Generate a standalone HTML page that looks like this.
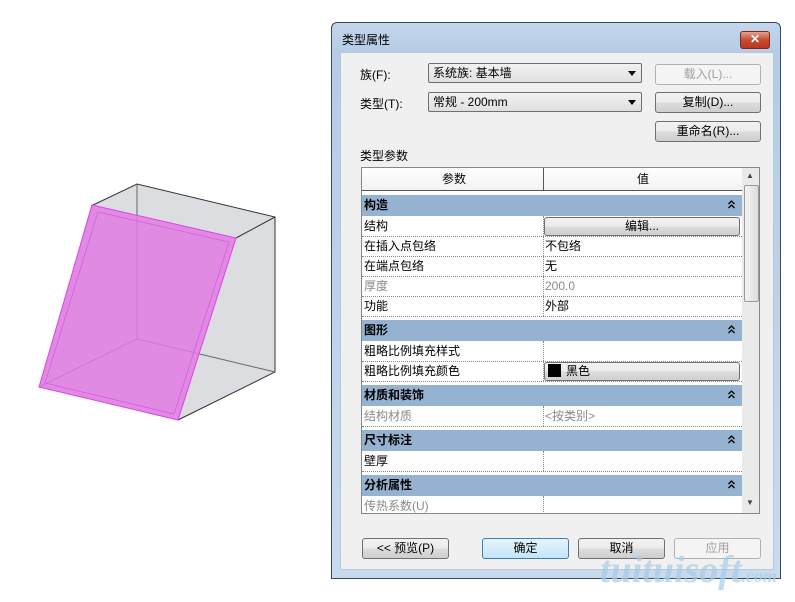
<!DOCTYPE html><html><head><meta charset="utf-8"><style>
body{margin:0;width:795px;height:602px;background:#fff;position:relative;overflow:hidden;font-family:"Liberation Sans","Noto Sans CJK SC",sans-serif;font-size:12px;color:#000}
.a{position:absolute}
.dlg{left:331px;top:22px;width:448px;height:555px;border:1px solid #3a4a5c;border-radius:6px 6px 0 0;background:linear-gradient(#c4d6ea,#b4cce6 30px,#c8daee);}
.inner{left:340px;top:52px;width:432px;height:516px;background:#f0f0f0;border:1px solid #b8c8da}
.btn{position:absolute;height:19px;border:1px solid #707070;border-radius:3px;background:linear-gradient(#f2f2f2,#ebebeb 50%,#dcdcdc 51%,#cfcfcf);text-align:center;line-height:19px;font-size:12px}
.dis{color:#a0a0a0;border-color:#adb2b5;background:#f4f4f4}
.cmb{position:absolute;height:18px;border:1px solid #707070;border-radius:2px;background:linear-gradient(#f2f2f2,#e0e0e0);line-height:18px;padding-left:4px}
.cmb:after{content:"";position:absolute;right:5px;top:7px;border:4px solid transparent;border-top:5px solid #000}
.grid{left:361px;top:167px;width:397px;height:345px;border:1px solid #828790;background:#fff;overflow:hidden}
.r{position:absolute;left:0;width:380px;height:20px;border-bottom:1px dotted #888;line-height:20px}
.r span{position:absolute;left:2px}
.r b{position:absolute;left:183px;font-weight:normal}
.r:after{content:"";position:absolute;left:181px;top:0;height:20px;border-left:1px dotted #888}
.g{position:absolute;left:0;width:380px;height:21px;background:#95b2d0;font-weight:bold;line-height:21px}
.g span{position:absolute;left:2px}
.g svg{position:absolute;right:7px;top:5px}
.gr{color:#8a8a8a}
</style></head><body>
<svg class="a" style="left:0;top:0" width="330" height="602">
<polygon points="91,206 137,184 275,217 275,372 178,420 39,387" fill="#dcdde0"/>
<polyline points="91,206 137,184 275,217 275,372 178,420" fill="none" stroke="#333" stroke-width="1"/>
<line x1="137" y1="184" x2="137" y2="339" stroke="#666"/>
<line x1="137" y1="339" x2="275" y2="372" stroke="#666"/>
<line x1="137" y1="339" x2="39" y2="387" stroke="#666"/>
<line x1="236" y1="238" x2="275" y2="217" stroke="#333"/>
<polygon points="92,205 236,238 178,420 39,387" fill="#e07be4" fill-opacity="0.85" stroke="#e040e8"/>
<polygon points="98,212 229,242 174,414 45,383" fill="none" stroke="#d85ce0" stroke-width="0.8"/>
</svg>
<div class="a dlg"></div>
<div class="a" style="left:342px;top:31px;font-size:12px">类型属性</div>
<div class="a" style="left:740px;top:31px;width:28px;height:16px;border:1px solid #7a2a20;border-radius:3px;background:linear-gradient(#e8a090,#c84a30 50%,#b83820);color:#fff;text-align:center;font-weight:bold;line-height:15px;font-size:12px">✕</div>
<div class="a inner"></div>
<div class="a" style="left:360px;top:66px">族(F):</div>
<div class="a" style="left:360px;top:95px">类型(T):</div>
<div class="cmb" style="left:428px;top:63px;width:208px">系统族: 基本墙</div>
<div class="cmb" style="left:428px;top:92px;width:208px">常规 - 200mm</div>
<div class="btn dis" style="left:655px;top:64px;width:104px">载入(L)...</div>
<div class="btn" style="left:655px;top:92px;width:104px">复制(D)...</div>
<div class="btn" style="left:655px;top:121px;width:104px">重命名(R)...</div>
<div class="a" style="left:360px;top:147px">类型参数</div>
<div class="a grid">
<div class="a" style="left:0;top:0;width:380px;height:22px;border-bottom:1px solid #555;background:linear-gradient(#fff,#f2f2f2);line-height:22px">
<span class="a" style="left:80px">参数</span><span class="a" style="left:181px;top:0;height:22px;border-left:1px solid #555"></span><span class="a" style="left:275px">值</span></div>
<div class="g" style="top:27px"><span>构造</span><svg width="7" height="9"><path d="M0.5 4L3.5 1L6.5 4M0.5 8L3.5 5L6.5 8" fill="none" stroke="#000" stroke-width="1.3"/></svg></div>
<div class="r" style="top:48px"><span>结构</span></div>
<div class="btn" style="left:182px;top:49px;width:194px;height:17px;line-height:17px">编辑...</div>
<div class="r" style="top:68px"><span>在插入点包络</span><b>不包络</b></div>
<div class="r" style="top:88px"><span>在端点包络</span><b>无</b></div>
<div class="r gr" style="top:108px"><span>厚度</span><b>200.0</b></div>
<div class="r" style="top:128px"><span>功能</span><b>外部</b></div>
<div class="g" style="top:152px"><span>图形</span><svg width="7" height="9"><path d="M0.5 4L3.5 1L6.5 4M0.5 8L3.5 5L6.5 8" fill="none" stroke="#000" stroke-width="1.3"/></svg></div>
<div class="r" style="top:173px"><span>粗略比例填充样式</span></div>
<div class="r" style="top:193px"><span>粗略比例填充颜色</span></div>
<div class="btn" style="left:182px;top:194px;width:194px;height:17px;line-height:17px;text-align:left"><span style="display:inline-block;width:13px;height:13px;background:#000;vertical-align:-2px;margin:0 5px 0 3px"></span>黑色</div>
<div class="g" style="top:217px"><span>材质和装饰</span><svg width="7" height="9"><path d="M0.5 4L3.5 1L6.5 4M0.5 8L3.5 5L6.5 8" fill="none" stroke="#000" stroke-width="1.3"/></svg></div>
<div class="r gr" style="top:238px"><span>结构材质</span><b>&lt;按类别&gt;</b></div>
<div class="g" style="top:262px"><span>尺寸标注</span><svg width="7" height="9"><path d="M0.5 4L3.5 1L6.5 4M0.5 8L3.5 5L6.5 8" fill="none" stroke="#000" stroke-width="1.3"/></svg></div>
<div class="r" style="top:283px"><span>壁厚</span></div>
<div class="g" style="top:307px"><span>分析属性</span><svg width="7" height="9"><path d="M0.5 4L3.5 1L6.5 4M0.5 8L3.5 5L6.5 8" fill="none" stroke="#000" stroke-width="1.3"/></svg></div>
<div class="r gr" style="top:328px"><span>传热系数(U)</span></div>
<div class="a" style="left:380px;top:0;width:17px;height:345px;background:#eaeaea"></div>
<div class="a" style="left:382px;top:17px;width:13px;height:115px;border:1px solid #999;border-radius:2px;background:linear-gradient(90deg,#f4f4f4,#dcdcdc)"></div>
<div class="a" style="left:384px;top:3px;font-size:8px;color:#444">▲</div>
<div class="a" style="left:384px;top:330px;font-size:8px;color:#444">▼</div>
</div>
<div class="btn" style="left:362px;top:538px;width:85px">&lt;&lt; 预览(P)</div>
<div class="btn" style="left:482px;top:538px;width:85px;border-color:#3c7fb1;background:linear-gradient(#e5f4fc,#c4e5f6)">确定</div>
<div class="btn" style="left:578px;top:538px;width:85px">取消</div>
<div class="btn dis" style="left:674px;top:538px;width:85px">应用</div>
<div class="a" style="left:600px;top:548px;font:italic bold 38px 'Liberation Serif',serif;color:#a8cde6;opacity:.7">tuituisoft<span style="font-size:18px">.com</span></div>
</body></html>
